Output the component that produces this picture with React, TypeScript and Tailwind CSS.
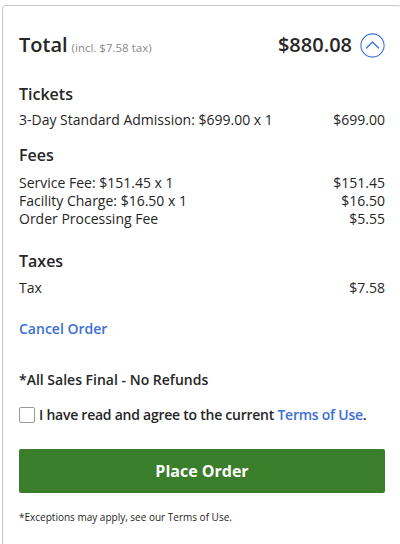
import React from "react";

export default function App() {
  const font = { fontFamily: '"Open Sans", "Liberation Sans", sans-serif' };
  return (
    <div className="w-[400px] h-[544px] overflow-hidden bg-white text-[#262626]" style={font}>
      <div className="ml-[2px] mt-[5px] w-[400px] h-[560px] border border-[#c8c8c8] rounded-[4px] px-[16px] pt-[24px]">
        <div className="flex items-center justify-between h-[30px]">
          <div className="flex items-baseline gap-[4px]">
            <span className="text-[20px] font-semibold leading-none">Total</span>
            <span className="text-[11.5px] text-[#8a8a8a] leading-none">(incl. $7.58 tax)</span>
          </div>
          <div className="flex items-center gap-[8px]">
            <span className="text-[20px] font-semibold leading-none">$880.08</span>
            <svg width="25" height="25" viewBox="0 0 25 25" fill="none">
              <circle cx="12.5" cy="12.5" r="11.6" stroke="#3b72e0" strokeWidth="1.1" />
              <path d="M6.5 15 L12.5 9 L18.5 15" stroke="#3b72e0" strokeWidth="1.4" strokeLinecap="round" strokeLinejoin="round" />
            </svg>
          </div>
        </div>

        <div className="mt-[23px] text-[16px] font-semibold leading-[22px]">Tickets</div>
        <div className="mt-[6px] flex justify-between text-[14px] leading-[18px]">
          <span>3-Day Standard Admission: $699.00 x 1</span>
          <span>$699.00</span>
        </div>

        <div className="mt-[15px] text-[16px] font-semibold leading-[22px]">Fees</div>
        <div className="mt-[8px] flex flex-col text-[14px] leading-[18px]">
          <div className="flex justify-between"><span>Service Fee: $151.45 x 1</span><span>$151.45</span></div>
          <div className="flex justify-between"><span>Facility Charge: $16.50 x 1</span><span>$16.50</span></div>
          <div className="flex justify-between"><span>Order Processing Fee</span><span>$5.55</span></div>
        </div>

        <div className="mt-[22px] text-[16px] font-semibold leading-[22px]">Taxes</div>
        <div className="mt-[7px] flex justify-between text-[14px] leading-[18px]">
          <span>Tax</span><span>$7.58</span>
        </div>

        <div className="mt-[23px] text-[14px] font-semibold leading-[18px] text-[#3b6fd6]">Cancel Order</div>

        <div className="mt-[33px] text-[14px] font-semibold leading-[18px]">*All Sales Final - No Refunds</div>

        <label className="mt-[17px] flex items-center gap-[4px] text-[14px] font-semibold leading-[18px] tracking-[-0.25px]">
          <span className="w-[16px] h-[16px] border border-[#999] rounded-[2px] bg-white shrink-0"></span>
          <span>I have read and agree to the current <span className="text-[#3b6fd6]">Terms of Use</span>.</span>
        </label>

        <button className="mt-[25px] w-full h-[44px] rounded-[2px] bg-[#3a7d2a] text-white text-[16px] font-bold">Place Order</button>

        <div className="mt-[17px] text-[10px] leading-[14px]">*Exceptions may apply, see our Terms of Use.</div>
      </div>
    </div>
  );
}
